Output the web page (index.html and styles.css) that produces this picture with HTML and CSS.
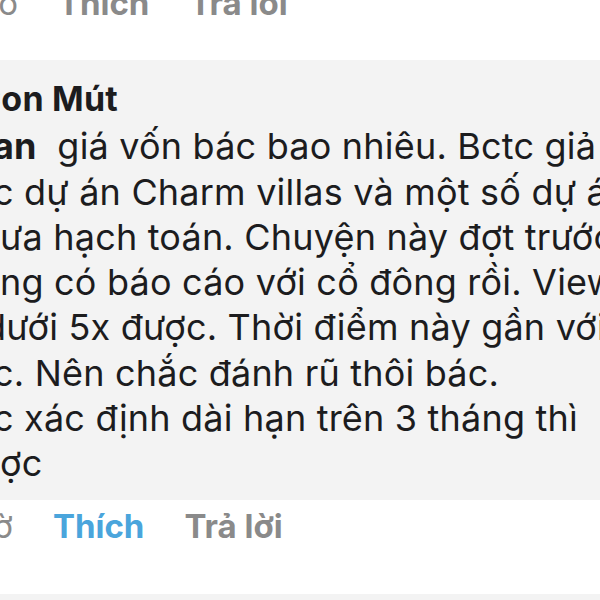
FILE: index.html
```html
<!DOCTYPE html>
<html lang="vi">
<head>
    <meta charset="UTF-8">
    <meta name="viewport" content="width=device-width, initial-scale=1.0">
    <title>Bình luận</title>
    <link rel="stylesheet" href="styles.css">
</head>
<body>
    <div class="actions top">
        <span class="time">giờ</span>
        <span class="link">Thích</span>
        <span class="link">Trả lời</span>
    </div>

    <div class="bubble">
        <div class="name">Con Mút</div>
        <div class="text">
            <div class="line cut"><b>an</b>&nbsp; giá vốn bác bao nhiêu. Bctc giả</div>
            <div class="line cut">c dự án Charm villas và một số dự án</div>
            <div class="line">ưa hạch toán. Chuyện này đợt trước</div>
            <div class="line">ng có báo cáo với cổ đông rồi. View</div>
            <div class="line deep">dưới 5x được. Thời điểm này gần với</div>
            <div class="line cut">c. Nên chắc đánh rũ thôi bác.</div>
            <div class="line cut">c xác định dài hạn trên 3 tháng thì</div>
            <div class="line">ợc</div>
        </div>
    </div>

    <div class="actions bottom">
        <span class="time">giờ</span>
        <span class="link liked">Thích</span>
        <span class="link">Trả lời</span>
    </div>

    <div class="next"></div>
</body>
</html>
```

FILE: styles.css
```css
* {
    margin: 0;
    padding: 0;
    box-sizing: border-box;
}

body {
    font-family: Inter, "Noto Sans", sans-serif;
    background: #ffffff;
    color: #1c1c1e;
    overflow: hidden;
    width: 600px;
    height: 600px;
}

.actions {
    display: flex;
    gap: 40px;
    font-size: 33px;
    font-weight: 700;
    line-height: 40px;
    color: #8a8a8a;
    white-space: nowrap;
}

.actions .time {
    font-weight: 400;
    margin-left: -35px;
}

.actions .liked {
    color: #4aa5dc;
}

.top {
    height: 60px;
    margin-top: -17px;
    margin-bottom: 17px;
    padding-left: 5px;
}

.bubble {
    background: #f3f3f3;
    height: 440px;
    padding-top: 16px;
    font-size: 36px;
    line-height: 45.3px;
    letter-spacing: 0.2px;
    white-space: nowrap;
    overflow: hidden;
}

.name {
    font-size: 34px;
    font-weight: 700;
    margin-left: -24px;
    margin-bottom: 3px;
}

.line b {
    font-weight: 700;
}

.line.cut {
    margin-left: -7px;
}

.line.deep {
    margin-left: -16px;
}

.bottom {
    height: 94px;
    padding-top: 6px;
}

.next {
    background: #f3f3f3;
    height: 10px;
}
```
